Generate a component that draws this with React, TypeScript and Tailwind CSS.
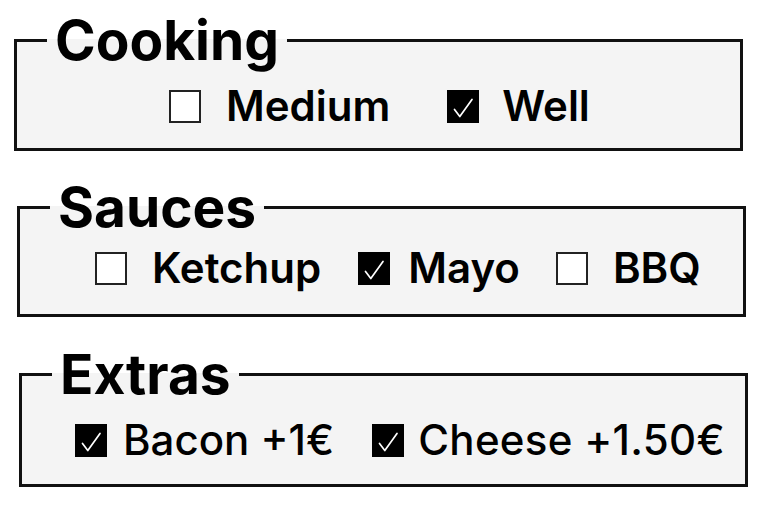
type Item = {
  label: string;
  checked: boolean;
  textClass: string;
};

type Group = {
  title: string;
  boxClass: string;
  rowClass: string;
  weight: string;
  items: Item[];
};

const groups: Group[] = [
  {
    title: 'Cooking',
    boxClass: 'ml-[14px] mt-[13px]',
    rowClass: 'pl-[152px] pt-[17px] pb-[21px]',
    weight: 'font-semibold',
    items: [
      { label: 'Medium', checked: false, textClass: 'ml-[25px] mr-[57px]' },
      { label: 'Well', checked: true, textClass: 'ml-[23px]' },
    ],
  },
  {
    title: 'Sauces',
    boxClass: 'ml-[17px] mt-[29px]',
    rowClass: 'pl-[75px] pt-[12px] pb-[25px]',
    weight: 'font-semibold',
    items: [
      { label: 'Ketchup', checked: false, textClass: 'ml-[25px] mr-[37px]' },
      { label: 'Mayo', checked: true, textClass: 'ml-[18px] mr-[36px]' },
      { label: 'BBQ', checked: false, textClass: 'ml-[25px]' },
    ],
  },
  {
    title: 'Extras',
    boxClass: 'ml-[19px] mt-[30px]',
    rowClass: 'pl-[53px] pt-[17px] pb-[23px]',
    weight: 'font-medium',
    items: [
      { label: 'Bacon +1€', checked: true, textClass: 'ml-[16px] mr-[38px]' },
      { label: 'Cheese +1.50€', checked: true, textClass: 'ml-[14px] tracking-[0.3px]' },
    ],
  },
];

const Box = ({ checked }: { checked: boolean }) =>
  checked ? (
    <span className="flex h-[33px] w-[32px] shrink-0 items-center justify-center bg-black">
      <svg width="32" height="33" viewBox="0 0 32 33" fill="none">
        <path d="M7.5 19.5 L12.8 26.5 L25 9.5" stroke="white" strokeWidth="1.7" strokeLinecap="round" strokeLinejoin="round" />
      </svg>
    </span>
  ) : (
    <span className="h-[33px] w-[32px] shrink-0 border-2 border-[#222] bg-white" />
  );

export default function App() {
  return (
    <div className="min-h-[512px] w-[780px] overflow-hidden bg-white pb-4 text-black [font-family:Inter,'Liberation_Sans',sans-serif]">
      {groups.map((g) => (
        <fieldset
          key={g.title}
          className={`w-[729px] border-[3px] border-[#111] bg-[#f4f4f4] ${g.boxClass}`}
        >
          <legend className="ml-[30px] px-[8px] text-[55px] font-bold leading-none">
            {g.title}
          </legend>
          <div className={`flex items-center ${g.rowClass}`}>
            {g.items.map((it) => (
              <label key={it.label} className="flex items-center">
                <Box checked={it.checked} />
                <span className={`text-[42px] leading-none ${g.weight} ${it.textClass}`}>
                  {it.label}
                </span>
              </label>
            ))}
          </div>
        </fieldset>
      ))}
    </div>
  );
}
